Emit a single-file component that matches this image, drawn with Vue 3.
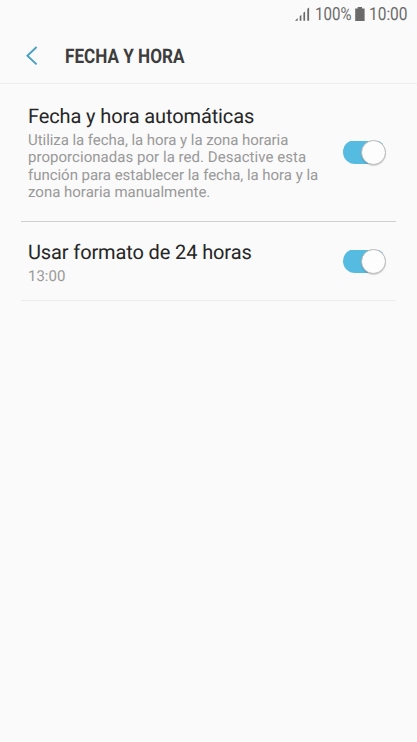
<script setup>
import { ref } from 'vue'

const settings = ref([
  {
    id: 'auto',
    title: 'Fecha y hora automáticas',
    lines: [
      { text: 'Utiliza la fecha, la hora y la zona horaria', tracking: -0.05 },
      { text: 'proporcionadas por la red. Desactive esta', tracking: 0.04 },
      { text: 'función para establecer la fecha, la hora y la', tracking: -0.03 },
      { text: 'zona horaria manualmente.', tracking: 0 },
    ],
    on: true,
  },
  {
    id: 'format',
    title: 'Usar formato de 24 horas',
    lines: [{ text: '13:00', tracking: 0 }],
    on: true,
  },
])
</script>

<template>
  <main class="screen">
    <div class="status">
      <svg class="signal" width="16" height="14" viewBox="0 0 16 14">
        <path d="M0 13.8 2.7 11.1V13.8ZM4.7 9.2 6.4 7.8V13.8H4.7ZM8.4 5.8 10.1 4.4V13.8H8.4ZM12.3 1.8 14.1.5V13.8H12.3Z" />
      </svg>
      <svg class="percent" width="38" height="24">
        <text x="0" y="16" textLength="36.5" lengthAdjust="spacingAndGlyphs">100%</text>
      </svg>
      <svg class="battery" width="10" height="14" viewBox="0 0 10 14">
        <path d="M2.7 0H7.1V1.5H9.6V14H.2V1.5H2.7Z" />
      </svg>
      <svg class="clock" width="39" height="24">
        <text x="0" y="16" textLength="38.5" lengthAdjust="spacingAndGlyphs">10:00</text>
      </svg>
    </div>
    <header class="header">
      <svg class="back" width="12" height="20" viewBox="0 0 12 20">
        <path d="M10.6 1 1.4 9.7 10.6 18.4" />
      </svg>
      <svg class="heading" width="126" height="30">
        <text x="0" y="20" textLength="119.5" lengthAdjust="spacingAndGlyphs">FECHA Y HORA</text>
      </svg>
    </header>
    <section v-for="item in settings" :key="item.id" class="row" :class="item.id">
      <div class="copy">
        <h2>{{ item.title }}</h2>
        <p
          v-for="line in item.lines"
          :key="line.text"
          :style="{ letterSpacing: line.tracking + 'px' }"
        >{{ line.text }}</p>
      </div>
      <button
        class="switch"
        :class="{ on: item.on }"
        role="switch"
        :aria-checked="item.on"
        @click="item.on = !item.on"
      >
        <span class="thumb"></span>
      </button>
    </section>
  </main>
</template>

<style>
body {
  background: #fafafa;
}
</style>

<style scoped>
.screen {
  height: 742px;
  background: #fafafa;
  font-family: Roboto, "Liberation Sans", sans-serif;
  text-rendering: geometricPrecision;
  overflow: hidden;
}
svg {
  display: block;
  flex: none;
  overflow: visible;
}
.status {
  display: flex;
  height: 29px;
  padding: 4px 9px 0 0;
  box-sizing: border-box;
  justify-content: flex-end;
  align-items: flex-start;
  fill: #6a6a6a;
  font-size: 18px;
}
.signal {
  margin: 3px 4px 0 0;
}
.percent {
  margin-right: 2px;
}
.battery {
  margin: 3px 4px 0 0;
}
.header {
  display: flex;
  height: 55px;
  box-sizing: border-box;
  align-items: flex-start;
  padding: 14px 0 0 26px;
  border-bottom: 1px solid #ededed;
}
.back {
  margin-top: 3px;
  fill: none;
  stroke: #4a9fc2;
  stroke-width: 1.9;
}
.heading {
  margin-left: 27px;
  font-size: 20px;
  font-weight: 700;
  fill: #3d3d3d;
}
.row {
  display: flex;
  box-sizing: border-box;
  margin: 0 21px;
  padding-left: 7px;
  padding-right: 9.7px;
  align-items: center;
  justify-content: space-between;
}
.auto {
  height: 138px;
  border-bottom: 1px solid #cfcfcf;
}
.auto .copy {
  padding-bottom: 1px;
}
.auto .switch {
  margin-bottom: 1px;
}
.format {
  height: 79px;
  border-bottom: 1px solid #ececec;
}
.format .copy {
  padding-top: 3px;
}
.copy {
  white-space: nowrap;
}
h2 {
  margin: 0 0 3px;
  font-size: 20px;
  font-weight: 400;
  line-height: 26px;
  letter-spacing: -0.12px;
  color: #262626;
}
p {
  margin: 0;
  font-size: 15px;
  line-height: 17.3px;
  color: #999;
}
.switch {
  display: flex;
  flex: none;
  width: 43.5px;
  height: 24px;
  padding: 0;
  border: 0;
  align-items: center;
  background: linear-gradient(#bdbdbd, #bdbdbd) 0 50% / 40px 23px no-repeat;
  border-radius: 12px;
}
.switch.on {
  justify-content: flex-end;
  background-image: linear-gradient(#55bbe0, #55bbe0);
}
.thumb {
  width: 25px;
  height: 25px;
  box-sizing: border-box;
  flex: none;
  border-radius: 50%;
  border: 1px solid #b9b9b9;
  background: #fdfdfd;
  box-shadow: 0 1px 1px rgba(0, 0, 0, 0.16);
}
</style>
